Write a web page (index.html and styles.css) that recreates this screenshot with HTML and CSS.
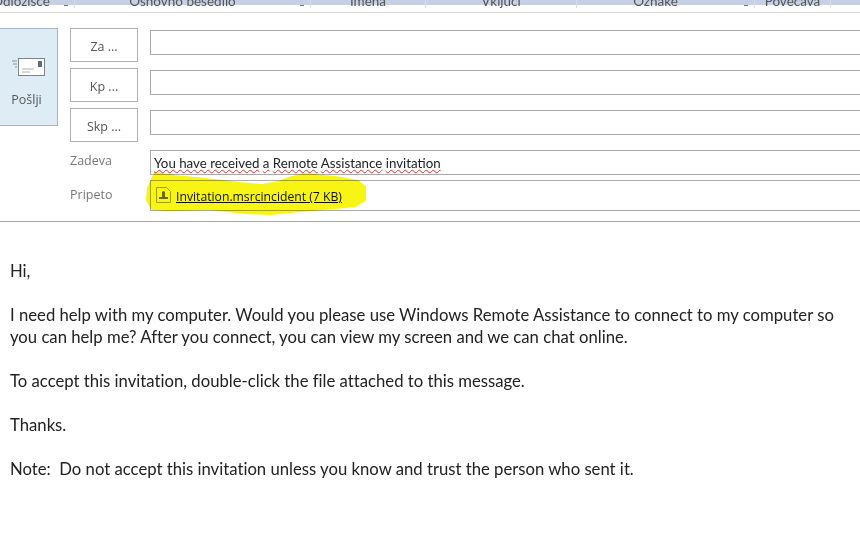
FILE: index.html
```html
<!DOCTYPE html>
<html lang="sl">
<head>
<meta charset="utf-8">
<title>You have received a Remote Assistance invitation</title>
<link rel="stylesheet" href="styles.css">
</head>
<body>
<div class="ribbon">
  <div class="group has-launch first"><span>Odložišče</span><i class="launch"></i></div>
  <div class="group has-launch"><span>Osnovno besedilo</span><i class="launch"></i></div>
  <div class="group"><span>Imena</span></div>
  <div class="group"><span>Vključi</span></div>
  <div class="group has-launch"><span>Oznake</span><i class="launch"></i></div>
  <div class="group"><span>Povečava</span></div>
</div>
<header class="compose">
  <div class="top">
    <button class="send" type="button">
      <svg class="send-icon" width="34" height="19" viewBox="0 0 34 19">
        <path d="M1 3h5M2 6h4M4 9h2" stroke="#8a9299" fill="none"/>
        <rect x="7.5" y="0.5" width="26" height="17" fill="#fff" stroke="#7d858c"/>
        <rect x="27" y="3" width="4" height="6" fill="#5d6d7e"/>
        <path d="M11 11h12M11 14h8" stroke="#a8b0b6" fill="none"/>
      </svg>
      <span>Pošlji</span>
    </button>
    <div class="addr">
      <div class="addr-row"><button class="pick" type="button">Za ...</button><div class="field"></div></div>
      <div class="addr-row"><button class="pick" type="button">Kp ...</button><div class="field"></div></div>
      <div class="addr-row"><button class="pick" type="button">Skp ...</button><div class="field"></div></div>
    </div>
  </div>
  <div class="meta-row subject-row">
    <label>Zadeva</label>
    <div class="field subject"><span class="sq">You have received</span> <span class="sq">a</span> <span class="sq">Remote</span> <span class="sq">Assistance</span> <span class="sq">invitation</span></div>
  </div>
  <div class="meta-row attach-row">
    <label>Pripeto</label>
    <div class="field attach">
      <svg class="file" width="15" height="16" viewBox="0 0 15 16">
        <path d="M.5.5h10l4 4v11H.5z" fill="none" stroke="#a5a43c"/>
        <path d="M3 12v-2h3V5c0-1 3-1 3 0v5h3v2z" fill="#6e6d18"/>
      </svg>
      <a href="#">Invitation.msrcincident (7 KB)</a>
    </div>
    <svg class="marker" width="230" height="46" viewBox="0 0 230 46">
      <path d="M10 1L30 4L60 7L95 11L117 13L133 10L147 5L160 2L190 5L213 9L220 15L220 28L210 34L190 36L155 39L125 42L100 41L65 37L25 38L7 37L2 28L3 16Z" fill="#f8f514" stroke="#f8f514" stroke-width="2" stroke-linejoin="round"/>
    </svg>
  </div>
</header>
<main class="body">
  <p>Hi,</p>
  <p>I need help with my computer. Would you please use Windows Remote Assistance to connect to my computer so you can help me? After you connect, you can view my screen and we can chat online.</p>
  <p>To accept this invitation, double-click the file attached to this message.</p>
  <p>Thanks.</p>
  <p>Note:&nbsp; Do not accept this invitation unless you know and trust the person who sent it.</p>
</main>
</body>
</html>
```
FILE: styles.css
```css
* { box-sizing: border-box; }
html, body { margin: 0; padding: 0; }
body {
  width: 860px;
  height: 537px;
  overflow: hidden;
  background: #fff;
  color: #222;
  font-family: "Lato", "Liberation Sans", sans-serif;
  font-variant-ligatures: none;
}

/* clipped ribbon strip */
.ribbon {
  display: grid;
  grid-template-columns: 75px 236px 115px 151px 178px 76px 29px;
  height: 13px;
  overflow: hidden;
  border-bottom: 1px solid #d9d6d3;
  background: linear-gradient(#c6cfe3 0 5px, #fff 5px);
}
.group {
  position: relative;
  display: flex;
  justify-content: center;
  align-items: flex-end;
  height: 8px;
  border-right: 1px solid #d8dce4;
  font-size: 13.5px;
  line-height: 14px;
  color: #555;
  white-space: nowrap;
}
.has-launch { padding-right: 20px; }
.first { padding-right: 32px; }
.launch {
  position: absolute;
  right: 6px;
  top: 5px;
  width: 4px;
  height: 1px;
  background: #777;
}

/* compose header */
.compose {
  position: relative;
  height: 209px;
  padding-top: 15px;
  border-bottom: 1px solid #aaa;
}
.top { display: flex; gap: 12px; align-items: flex-start; }
.send {
  display: flex;
  flex-direction: column;
  align-items: center;
  width: 59px;
  height: 98px;
  margin: 0 0 0 -1px;
  padding: 29px 4px 0 0;
  background: #deecf6;
  border: 1px solid #a3b6c4;
  font: 12.5px "Open Sans", sans-serif;
  color: #555;
}
.send-icon { margin-left: 2px; margin-bottom: 14px; }
.addr { flex: 1; display: flex; flex-direction: column; gap: 6px; }
.addr-row { display: flex; gap: 12px; align-items: flex-start; height: 34px; }
.pick {
  width: 68px;
  height: 34px;
  padding: 2px 0 0;
  background: #fff;
  border: 1px solid #b0b0b0;
  font: 12.5px "Open Sans", sans-serif;
  color: #555;
}
.field {
  flex: 1;
  height: 25px;
  border: 1px solid #aaa;
  border-right: 0;
}
.addr-row .field { margin-top: 2px; }
.meta-row {
  display: flex;
  align-items: center;
  padding-left: 70px;
}
.meta-row label {
  width: 80px;
  font: 12.5px "Open Sans", sans-serif;
  color: #777;
}
.subject-row { margin-top: 8px; height: 25px; }
.subject-row label { margin-top: -4px; }
.subject {
  padding: 2px 0 0 3px;
  font: 13.3px/20px "Lato", sans-serif;
  color: #222;
}
.sq {
  text-decoration: underline wavy #d33;
  text-decoration-thickness: 1px;
  text-underline-offset: 1px;
}
.attach-row { position: relative; margin-top: 5px; height: 31px; }
.attach-row label { margin-top: -3px; }
.attach {
  position: relative;
  z-index: 1;
  display: flex;
  align-items: center;
  gap: 5px;
  height: 31px;
  padding: 0 0 0 5px;
  font: 12.2px "Open Sans", sans-serif;
}
.attach a { color: #111; text-decoration: underline; margin-top: 2px; }
.file { flex: none; margin-top: -2px; }
.marker {
  position: absolute;
  left: 145px;
  top: -8px;
  z-index: 2;
  mix-blend-mode: multiply;
  pointer-events: none;
}

/* message body */
.body {
  padding: 38px 10px 0;
  font-size: 16.7px;
  line-height: 22px;
}
.body p { margin: 0 0 22px; }
```
